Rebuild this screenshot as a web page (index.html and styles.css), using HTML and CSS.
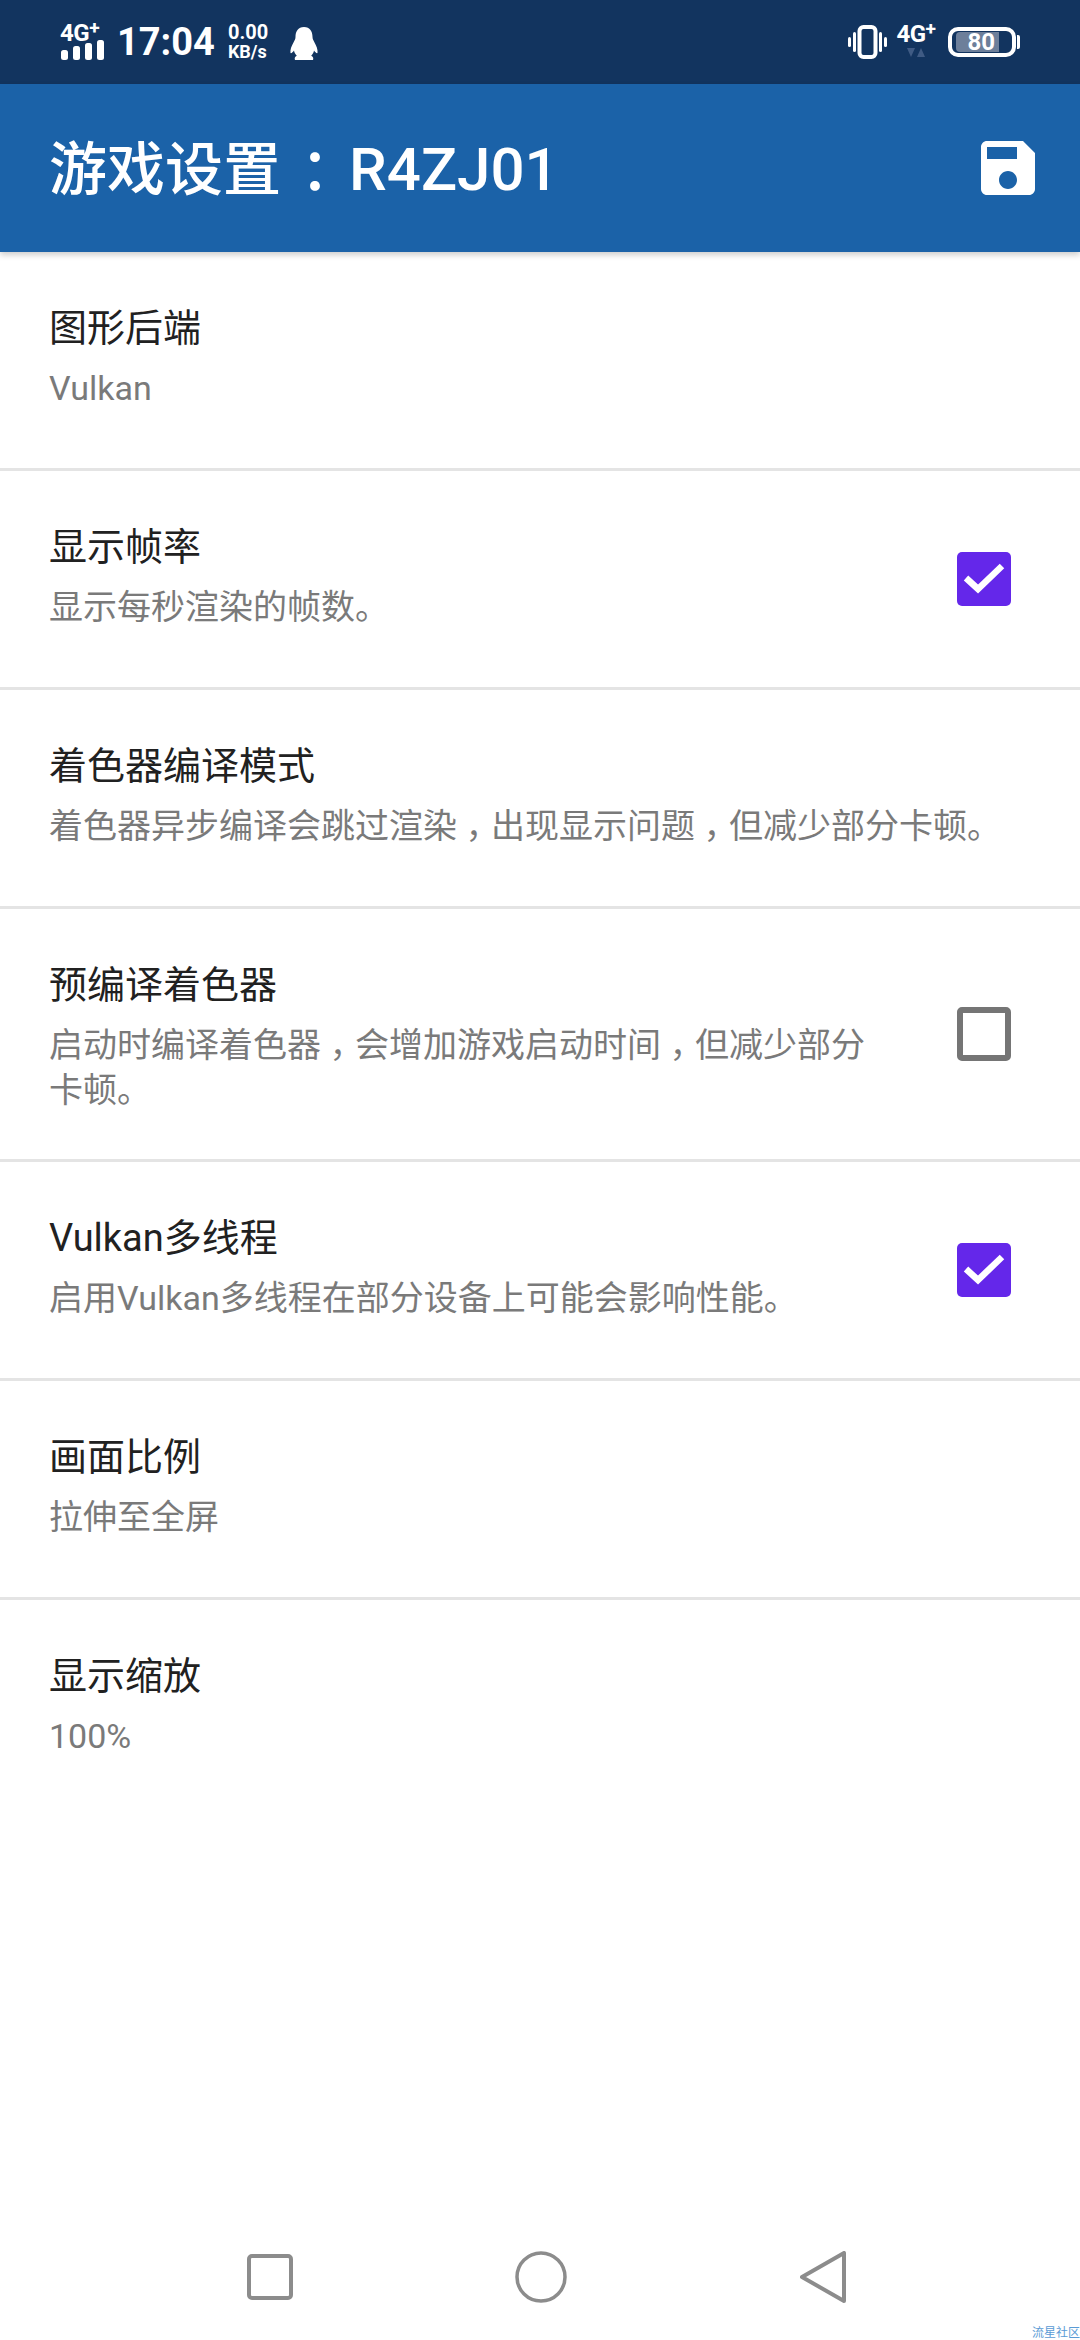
FILE: index.html
```html
<!DOCTYPE html>
<html lang="zh-CN">
<head>
    <meta charset="UTF-8">
    <meta name="viewport" content="width=device-width, initial-scale=1.0">
    <title>游戏设置</title>
    <link rel="stylesheet" href="styles.css">
</head>
<body>
    <div class="status-bar">
        <div class="status-left">
            <div class="signal">
                <span class="net">4G<sup>+</sup></span>
                <svg class="bars" width="44" height="20" viewBox="0 0 44 20"><rect x="1" y="10" width="7" height="10" rx="2.500"/><rect x="13" y="6" width="7" height="14" rx="2.500"/><rect x="25" y="3" width="7" height="17" rx="2.500"/><rect x="37" y="0" width="7" height="20" rx="2.500"/></svg>
            </div>
            <span class="time">17:04</span>
            <div class="speed"><span>0.00</span><span class="speed-unit">KB/s</span></div>
            <svg class="penguin" width="28" height="33" viewBox="0 0 28 33"><path d="M14 0C8 0 5.500 4.500 5.500 10c0 2-1 3.500-2 5.500C1.500 19 0 22.500 .5 26c.8.6 2.500-1 3.500-2.500.3 2 1.300 3.800 2.800 5.200C5 29.500 4.200 31 5 33h18c.8-2 0-3.500-1.800-4.300 1.500-1.400 2.500-3.200 2.800-5.200 1 1.500 2.700 3.100 3.500 2.500.5-3.500-1-7-3-10.500-1-2-2-3.500-2-5.500C22.500 4.500 20 0 14 0z" fill="#fff"/></svg>
        </div>
        <div class="status-right">
            <svg class="vibrate" width="39" height="34" viewBox="0 0 39 34"><rect x="11.500" y="2" width="16" height="30" rx="4" fill="none" stroke="#fff" stroke-width="4"/><rect x="0" y="12" width="3" height="10" rx="1.500" fill="#fff"/><rect x="5" y="7" width="3" height="20" rx="1.500" fill="#fff"/><rect x="31" y="7" width="3" height="20" rx="1.500" fill="#fff"/><rect x="36" y="12" width="3" height="10" rx="1.500" fill="#fff"/></svg>
            <div class="signal signal-data">
                <span class="net">4G<sup>+</sup></span>
                <svg width="18" height="9" viewBox="0 0 18 9"><path d="M0 0h8L4 9zM10 9h8L14 0z" fill="#3f5b84"/></svg>
            </div>
            <div class="battery">
                <div class="battery-body"><span class="battery-level">80</span></div>
                <div class="battery-tip"></div>
            </div>
        </div>
    </div>

    <div class="toolbar">
        <span class="toolbar-title">游戏设置<span class="title-colon">：</span><span class="title-id">R4ZJ01</span></span>
        <svg class="save-icon" width="72" height="72" viewBox="0 0 24 24"><path d="M17 3H5c-1.110 0-2 .9-2 2v14c0 1.100.89 2 2 2h14c1.100 0 2-.9 2-2V7l-4-4zm-5 16c-1.660 0-3-1.340-3-3s1.340-3 3-3 3 1.340 3 3-1.340 3-3 3zm3-10H5V5h10v4z" fill="#fff"/></svg>
    </div>

    <div class="settings">
        <div class="row">
            <div class="row-text">
                <div class="row-title">图形后端</div>
                <div class="row-summary">Vulkan</div>
            </div>
        </div>
        <div class="row">
            <div class="row-text">
                <div class="row-title">显示帧率</div>
                <div class="row-summary">显示每秒渲染的帧数。</div>
            </div>
            <div class="checkbox checked"><svg width="54" height="54" viewBox="0 0 54 54"><path d="M9 26l12 11 24-23" fill="none" stroke="#fff" stroke-width="6.500"/></svg></div>
        </div>
        <div class="row">
            <div class="row-text">
                <div class="row-title">着色器编译模式</div>
                <div class="row-summary">着色器异步编译会跳过渲染<span class="comma">，</span>出现显示问题<span class="comma">，</span>但减少部分卡顿。</div>
            </div>
        </div>
        <div class="row">
            <div class="row-text">
                <div class="row-title">预编译着色器</div>
                <div class="row-summary">启动时编译着色器<span class="comma">，</span>会增加游戏启动时间<span class="comma">，</span>但减少部分<br>卡顿。</div>
            </div>
            <div class="checkbox"></div>
        </div>
        <div class="row">
            <div class="row-text">
                <div class="row-title">Vulkan多线程</div>
                <div class="row-summary">启用Vulkan多线程在部分设备上可能会影响性能。</div>
            </div>
            <div class="checkbox checked"><svg width="54" height="54" viewBox="0 0 54 54"><path d="M9 26l12 11 24-23" fill="none" stroke="#fff" stroke-width="6.500"/></svg></div>
        </div>
        <div class="row">
            <div class="row-text">
                <div class="row-title">画面比例</div>
                <div class="row-summary">拉伸至全屏</div>
            </div>
        </div>
        <div class="row last">
            <div class="row-text">
                <div class="row-title">显示缩放</div>
                <div class="row-summary">100%</div>
            </div>
        </div>
    </div>

    <div class="nav-bar">
        <svg width="46" height="46" viewBox="0 0 46 46"><rect x="2" y="2" width="42" height="42" rx="3" fill="none" stroke="#8c8c8c" stroke-width="4"/></svg>
        <svg width="52" height="52" viewBox="0 0 52 52"><circle cx="26" cy="26" r="24" fill="none" stroke="#8c8c8c" stroke-width="3.500"/></svg>
        <svg class="nav-back" width="46" height="52" viewBox="0 0 46 52"><path d="M44 2v48L2 26z" fill="none" stroke="#8c8c8c" stroke-width="4" stroke-linejoin="round"/></svg>
    </div>
    <span class="watermark">流星社区</span>
</body>
</html>
```

FILE: styles.css
```css
* {
    box-sizing: border-box;
}
html, body {
    height: 100%;
}
body {
    margin: 0;
    background: #fff;
    font-family: Roboto, "Noto Sans CJK SC", sans-serif;
    display: flex;
    flex-direction: column;
    position: relative;
    overflow: hidden;
}
sup {
    font-size: 0.8em;
    line-height: 0;
    vertical-align: 7px;
}

/* status bar */
.status-bar {
    height: 84px;
    background: #12345f;
    color: #fff;
    display: flex;
    align-items: center;
    justify-content: space-between;
    padding: 0 60px;
    flex-shrink: 0;
}
.status-left, .status-right {
    display: flex;
    align-items: center;
}
.signal {
    display: flex;
    flex-direction: column;
    width: 44px;
}
.net {
    font-size: 24px;
    font-weight: 700;
    line-height: 18px;
    white-space: nowrap;
    letter-spacing: -0.5px;
}
.bars {
    fill: #fff;
    margin-top: -2px;
}
.time {
    font-size: 38px;
    font-weight: 700;
    margin-left: 13px;
}
.speed {
    display: flex;
    flex-direction: column;
    font-size: 20px;
    font-weight: 700;
    line-height: 19px;
    margin-left: 13px;
}
.speed-unit {
    font-size: 18px;
}
.penguin {
    margin-left: 22px;
    margin-top: 2px;
}
.vibrate {
    margin-right: 9px;
}
.signal-data {
    width: 40px;
    align-items: center;
    margin-top: -2px;
}
.signal-data svg {
    margin-top: 5px;
}
.battery {
    display: flex;
    align-items: center;
    margin-left: 12px;
}
.battery-body {
    width: 68px;
    height: 30px;
    border: 4px solid #fff;
    border-radius: 10px;
    padding: 1px 0 0 4px;
}
.battery-level {
    display: block;
    width: 43px;
    height: 20px;
    background: #6d7f9a;
    border-radius: 4px 0 0 4px;
    font-size: 24px;
    font-weight: 700;
    line-height: 20px;
    text-align: right;
    padding-right: 4px;
}
.battery-tip {
    width: 3px;
    height: 14px;
    background: #fff;
    border-radius: 0 2px 2px 0;
    margin-left: 1px;
}

/* toolbar */
.toolbar {
    height: 168px;
    background: #1b62a8;
    color: #fff;
    display: flex;
    align-items: center;
    justify-content: space-between;
    padding: 0 36px 0 49px;
    box-shadow: 0 3px 6px rgba(0, 0, 0, 0.2);
    flex-shrink: 0;
    position: relative;
}
.toolbar-title {
    font-size: 58px;
    font-weight: 500;
    margin-bottom: 6px;
}
.title-colon {
    display: inline-block;
    width: 68px;
    text-align: center;
    font-feature-settings: "halt";
}
.title-id {
    font-size: 60px;
}

/* settings list */
.row {
    display: flex;
    align-items: center;
    min-height: 219px;
    padding: 0 69px 0 49px;
    border-bottom: 3px solid #e4e4e4;
}
.row.last {
    border-bottom: none;
}
.row-text {
    flex: 1;
    align-self: flex-start;
    padding: 51px 0 46px;
}
.row-title {
    font-size: 38px;
    line-height: 50px;
    color: #212121;
}
.row-summary {
    font-size: 34px;
    line-height: 45px;
    color: #7a7a7a;
    margin-top: 13px;
}
.comma {
    display: inline-block;
    width: 1em;
    text-align: center;
    font-feature-settings: "halt";
}
.checkbox {
    width: 54px;
    height: 54px;
    border: 6px solid #757575;
    border-radius: 5px;
    flex-shrink: 0;
}
.checkbox.checked {
    background: #6427ea;
    border: none;
}
.checkbox svg {
    display: block;
}

/* bottom nav */
.nav-bar {
    margin-top: auto;
    height: 90px;
    margin-bottom: 18px;
    display: flex;
    align-items: center;
    padding-left: 247px;
    gap: 222px;
}
.nav-back {
    margin-left: 11px;
}
.watermark {
    position: absolute;
    right: 0;
    bottom: 0;
    font-size: 12px;
    line-height: 14px;
    color: #5b9bd5;
}
```
